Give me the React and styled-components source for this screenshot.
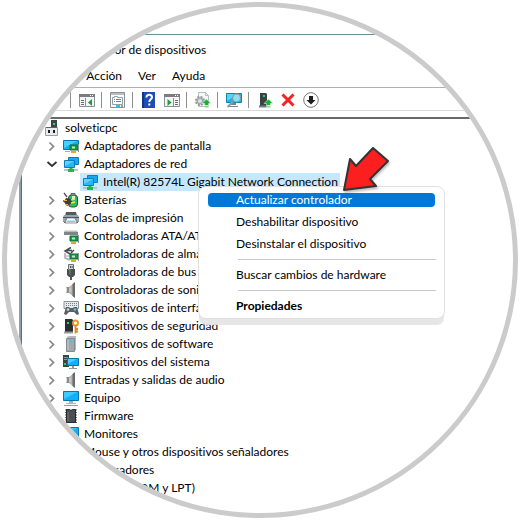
import { Fragment } from 'react';
import styled, { createGlobalStyle } from 'styled-components';

const GlobalStyle = createGlobalStyle`
  body {
    margin: 0;
    background-color: white;
  }

  button {
    padding: 0;
    border: 0;
    background: none;
    color: inherit;
    font: inherit;
  }
`;

const Lens = styled.main`
  display: flex;
  flex-direction: column;
  box-sizing: border-box;
  margin: 2px;
  aspect-ratio: 1;
  border: 5px solid #cbcbcb;
  border-radius: 50%;
  overflow: hidden;
  font-family: Lato, 'Open Sans', sans-serif;
  font-size: 12px;
  font-variant-ligatures: none;
  line-height: 18px;
  color: black;
`;

const Window = styled.section`
  display: flex;
  flex-direction: column;
  flex: 1;
  margin: 27px 0 0 12px;
  border-top: 1px solid #6c8e99;
  border-left: 2px solid #8ca0aa;
`;

const TitleBar = styled.header`
  display: flex;
  align-items: center;
  height: 30px;
  padding-left: 30px;
`;

const Title = styled.h1`
  margin: 0;
  font-size: 12px;
  font-weight: 400;
`;

const MenuBar = styled.nav`
  display: flex;
  align-items: center;
  height: 22px;
  padding-left: 1px;
`;

const MenuBarButton = styled.button`
  padding: 0 8px;
`;

const Toolbar = styled.div`
  display: flex;
  align-items: center;
  gap: 7px;
  height: 20px;
  padding: 2px 0 0 49px;
  margin-bottom: 6px;
  border-top: 1px solid #b0b0b0;
  border-bottom: 1px solid #dadada;
`;

const ToolGroup = styled.div`
  display: flex;
  gap: 7px;
  margin-right: -1px;
  padding-left: 8px;
  border-left: 1px solid #8e8e8e;
`;

const ToolButton = styled.button`
  display: flex;
`;

const TreePane = styled.div`
  flex: 1;
  border-top: 2px solid #696969;
  border-left: 1px solid #696969;
`;

const Tree = styled.ul`
  margin: 0;
  padding: 0;
  list-style: none;
`;

const Row = styled.div`
  position: relative;
  display: flex;
  align-items: center;
  height: 18px;
  padding-left: ${(props) => (props.$level === 2 ? 58 : 22)}px;
`;

const Toggle = styled.button`
  display: flex;
  width: 16px;
  margin-right: 3px;
`;

const Label = styled.span`
  display: flex;
  align-items: center;
  gap: 5px;
  white-space: nowrap;
  padding: ${(props) => (props.$selected ? '0 2px' : '0')};
  background-color: ${(props) => (props.$selected ? '#c5e8ff' : 'transparent')};
`;

const ContextMenu = styled.div`
  position: absolute;
  z-index: 1;
  top: 13px;
  left: 176px;
  display: flex;
  flex-direction: column;
  gap: 8px;
  width: 227px;
  padding: 6px 9px 5px;
  border: 1px solid #e0e0e0;
  border-radius: 8px;
  background-color: white;
  box-shadow: 0 7px 1px -1px #e6e6e6;
`;

const MenuItem = styled.button`
  padding-left: 28px;
  border-radius: 4px;
  line-height: 14px;
  text-align: left;
  font-weight: ${(props) => (props.$bold ? 700 : 400)};
  color: ${(props) => (props.$active ? 'white' : 'black')};
  background-color: ${(props) => (props.$active ? '#0078d7' : 'transparent')};
`;

const Separator = styled.hr`
  width: 198px;
  height: 1px;
  margin: 0 0 0 30px;
  border: 0;
  background-color: #c8c8c8;
`;

const Pointer = styled.svg`
  position: absolute;
  top: -42px;
  left: 142px;
  filter: drop-shadow(1px 2px 1px rgba(0, 0, 0, 0.25));
`;

const Icon = ({ children }) => (
  <svg width="16" height="16" viewBox="0 0 16 16" aria-hidden="true">
    {children}
  </svg>
);

const UpArrow = () => (
  <path d="M11.5 7l4.5 4.5h-2.5v2h-4v-2H7zM9.5 14.2h4v1.3h-4z" fill="#10b52c" stroke="white" strokeWidth=".5" />
);

const NetworkShape = () => (
  <>
    <path d="M5.5 1.5h10v7h-10z" fill="#16a9f2" stroke="#0b7fbd" />
    <path d="M1.5 4.500h10v7h-10z" fill="#24b8fb" stroke="#0b7fbd" />
    <path d="M2 5h9L2 10z" fill="#62d0ff" />
    <path d="M1 14h14" stroke="#b9c4c4" strokeWidth="2" />
    <path d="M6.500 12h3v1H11v3H5v-3h1.500z" fill="#20b84a" />
  </>
);

const Speaker = () => (
  <Icon>
    <path d="M3 5h3v6H3z" fill="#8b8b8b" />
    <path d="M6 5l5-4v14l-5-4z" fill="#b4b4b4" />
    <path d="M9.500 2L12 0v16l-2.500-2z" fill="#6b6b6b" />
    <path d="M3.500 5.500v5M7 6v4" stroke="#ddd" />
  </Icon>
);

const MonitorShape = () => (
  <>
    <path d="M.5 1.500h15v9H.5z" fill="#0fb1fb" stroke="#0876a8" />
    <path d="M1 2h13L1 9z" fill="#3fcaff" />
    <path d="M6 11h4v2H6z" fill="#a5b4bd" />
    <path d="M3 13.500h10" stroke="#a5b4bd" />
    <path d="M1 15.500h14" stroke="#8d9ba3" />
  </>
);

const Board = () => (
  <>
    <path d="M7 8h8v5H7z" fill="#169a45" stroke="#0c6c31" />
    <path d="M9 9.500h3v2H9z" fill="#bfe8c8" />
    <path d="M8 14h5v2H8z" fill="#e2a928" />
    <path d="M15.500 7v8" stroke="#8c9898" />
  </>
);

const icons = {
  pc: (
    <Icon>
      <path d="M7 0h6v8H7z" fill="#3c4347" />
      <path d="M9 3h2v2H9z" fill="#2ed66b" />
      <path d="M1.500 7.500h12v8h-12z" fill="#e9ecec" stroke="#9a9fa1" />
      <path d="M2 7.500h11" stroke="#5c6265" />
      <path d="M4 10h2v3H4zM9 10h2v3H9z" fill="#1c1c1c" />
    </Icon>
  ),
  display: (
    <Icon>
      <path d="M.5 2.500h15v9H.5z" fill="#12adf5" stroke="#0876a8" />
      <path d="M1 3h13L1 10z" fill="#48ceff" />
      <path d="M2 13.500h5" stroke="#9fb0b8" />
      <g transform="translate(0 -1)"><Board /></g>
    </Icon>
  ),
  network: <Icon><NetworkShape /></Icon>,
  battery: (
    <Icon>
      <path d="M8 1.500h4v2H8z" fill="#d9dfdf" stroke="#5b6666" />
      <rect x="5.500" y="3" width="9" height="12" rx="3" fill="#25c35e" stroke="#3e4747" />
      <path d="M9 4h3v3H9z" fill="#d5f7de" />
      <path d="M1 1l3 4M0 9h3" stroke="#555" strokeWidth="1.300" />
      <path d="M3 6l6 1v4l-5 3-3-4z" fill="#3b3f40" />
      <path d="M8 8l4-1M8 11l4-1" stroke="#ece36a" strokeWidth="1.300" />
      <path d="M1 8.500h3M2 12.500h3" stroke="#e1b03a" />
    </Icon>
  ),
  printer: (
    <Icon>
      <path d="M3 2h10l1 4H2z" fill="#545b5f" />
      <path d="M1 5h14l1 2v5H0V7z" fill="#9ba2a5" />
      <path d="M0 7.500h16M1 12.500h14" stroke="#50575a" />
      <path d="M4 8h8l2 5H2z" fill="white" stroke="#666" strokeWidth=".7" />
      <path d="M4.500 10.500h7l1 1.500h-9z" fill="#74cdf6" />
    </Icon>
  ),
  ata: (
    <Icon>
      <path d="M2 2h11l2 2v3H1V4z" fill="#b8bdc0" />
      <path d="M1 5.500h14" stroke="#7e8588" strokeWidth="3" />
      <path d="M2 2.500h11" stroke="#dadfe0" />
      <Board />
    </Icon>
  ),
  storage: (
    <Icon>
      <path d="M8 1.500L2 5l6 3.500M4 4.500h5M11 4L8 7" fill="none" stroke="#454b4e" strokeWidth="1.500" />
      <path d="M2 7v5l5 2" fill="none" stroke="#a3aaad" strokeWidth="1.500" />
      <path d="M3 10h4" stroke="#9ba2a5" />
      <Board />
    </Icon>
  ),
  usb: (
    <Icon>
      <path d="M5.500.5h5v5h-5z" fill="#d3d6d8" stroke="#6c7275" />
      <path d="M7 2h.8v2H7zM8.700 2h.8v2h-.8z" fill="#333" />
      <path d="M4 5h8v6l-2 2H6l-2-2z" fill="#494e51" />
      <path d="M5 5.500h2v5" fill="none" stroke="#80878b" />
      <path d="M8 12v4" stroke="#555" strokeWidth="2" />
    </Icon>
  ),
  sound: <Speaker />,
  hid: (
    <Icon>
      <path d="M1 1.500h14.500v7H1z" fill="#e7eaeb" stroke="#8b9295" />
      <path d="M3 3.500h11M3 5.500h11" stroke="#788084" strokeDasharray="1 1" />
      <path d="M3 7h3l1 1h3l1-1h3l2 7-2 1-3-3H6l-3 3-2-1z" fill="#596166" />
      <circle cx="5" cy="9.500" r="1.300" fill="#d0d5d7" />
      <circle cx="12" cy="9.500" r="1.300" fill="#55c5f7" />
    </Icon>
  ),
  security: (
    <Icon>
      <path d="M2 1h7l1 1v12H2z" fill="#292e30" />
      <path d="M4 4h2v2H4z" fill="#24d668" />
      <path d="M1 14.500h9" stroke="#989ea0" strokeWidth="2" />
      <circle cx="12.500" cy="5" r="2.500" fill="white" stroke="#e4992a" strokeWidth="2" />
      <path d="M12.500 7v8.500M13 11h2M13 13.500h2" stroke="#d78a1d" strokeWidth="1.800" />
    </Icon>
  ),
  software: (
    <Icon>
      <path d="M4 1l2-1h7v14l-2 1H4z" fill="#b2b8bb" />
      <path d="M3.500 2.500h8v13h-8z" fill="#a2a9ad" stroke="#848c90" />
      <path d="M7 4h2v2H7z" fill="#2cc9fa" />
      <path d="M5 4v10" stroke="#c4cacc" />
    </Icon>
  ),
  system: (
    <Icon>
      <path d="M0 1h6v12H0z" fill="#3b4347" />
      <path d="M1 3.500h4M1 5.500h4" stroke="#8b9599" />
      <path d="M1 9h2v2H1z" fill="#29d46b" />
      <path d="M4.500 4.500h11v7h-11z" fill="#13aff9" stroke="#0876a8" />
      <path d="M5 5h9l-9 5z" fill="#4aceff" />
      <path d="M9 12h2v2H9zM6 14h8v1H6z" fill="#8c9a9f" />
    </Icon>
  ),
  computer: <Icon><MonitorShape /></Icon>,
  firmware: (
    <Icon>
      <path d="M2 2h12M2 4.500h12M2 7h12M2 9.500h12M2 12h12M2 14.500h12" stroke="#666" />
      <path d="M3.500 1.500h3l1 1h1l1-1h3v13h-9z" fill="#4b4f52" stroke="#25292b" />
      <path d="M5 4v9" stroke="#73797c" />
    </Icon>
  ),
  mouse: (
    <Icon>
      <rect x="4.500" y="1" width="7" height="14" rx="3.500" fill="#e3e6e8" stroke="#727b80" />
      <path d="M8 2v4" stroke="#727b80" />
    </Icon>
  ),
};

const tools = [
  [
    ['Mostrar u ocultar el árbol', (
      <>
        <path d="M.5 2.500h15v12H.5z" fill="#f5f5f5" stroke="#8b9093" />
        <path d="M0 3.500h16" stroke="#777d80" strokeWidth="3" />
        <path d="M11 3.500h1M13 3.500h1" stroke="white" />
        <path d="M6.500 6v9" stroke="#8b9093" />
        <path d="M2 8.500h3M2 10.500h3M2 12.500h3" stroke="#647078" />
        <path d="M13 7v7l-4-3.500z" fill="#08a832" />
      </>
    )],
  ],
  [
    ['Propiedades', (
      <>
        <path d="M.5.500h14v15H.5z" fill="#fbfbfb" stroke="#8b9093" />
        <path d="M1 2h13" stroke="#b9bec1" strokeWidth="2" />
        <path d="M2.500 5.500h2v-1h3v1h5v7h-10z" fill="white" stroke="#8fa0ab" />
        <path d="M4 7.500h1M6 7.500h5M4 9.500h1M6 9.500h5" stroke="#758087" />
        <path d="M6 14h4" stroke="#22c7f5" strokeWidth="2" />
        <path d="M11 14h2" stroke="#9aa0a4" strokeWidth="2" />
      </>
    )],
  ],
  [
    ['Ayuda', (
      <>
        <path d="M1 0h13v16H1z" fill="#1d4eb5" />
        <path d="M1 0h2v16H1z" fill="#123584" />
        <path d="M5.500 5.500C5.500 1.500 11 2 11 5.200c0 2-2.700 2.300-2.700 4.800M8.300 11.500v2" fill="none" stroke="white" strokeWidth="2" />
      </>
    )],
    ['Mostrar panel de acciones', (
      <>
        <path d="M.5 2.500h15v12H.5z" fill="#f5f5f5" stroke="#8b9093" />
        <path d="M0 3.500h16" stroke="#777d80" strokeWidth="3" />
        <path d="M11 3.500h1M13 3.500h1" stroke="white" />
        <path d="M9.500 6v9" stroke="#8b9093" />
        <path d="M11 8.500h3M11 10.500h3M11 12.500h3" stroke="#647078" />
        <path d="M3.500 7v7l4-3.500z" fill="#08a832" />
      </>
    )],
  ],
  [
    ['Actualizar controlador', (
      <>
        <path d="M3.500.5h7l3 3v11h-10z" fill="#f7f7f7" stroke="#b8bdc0" />
        <path d="M10.500.5v3h3" fill="none" stroke="#b8bdc0" />
        <circle cx="5" cy="9" r="4" fill="none" stroke="#8f979b" strokeWidth="2" strokeDasharray="2 1.140" />
        <circle cx="5" cy="9" r="2.700" fill="#e1e5e7" stroke="#a0a8ac" strokeWidth="1.500" />
        <UpArrow />
      </>
    )],
  ],
  [
    ['Buscar cambios de hardware', (
      <>
        <path d="M.5 1.500h15v9H.5z" fill="#18b5ef" stroke="#0a83b3" />
        <path d="M1 2h11L1 9z" fill="#52d6ff" />
        <path d="M5 11h5v2H5zM3 14h9v1H3z" fill="#77868e" />
        <circle cx="10.500" cy="6" r="4" fill="#8fdcfa" stroke="#8b989e" strokeWidth="1.200" />
        <path d="M7.500 9l-6 6" stroke="#829fad" strokeWidth="2" />
      </>
    )],
  ],
  [
    ['Habilitar dispositivo', (
      <>
        <path d="M3 1h6l1 1v12H3z" fill="#3a4246" />
        <path d="M6 3h2v2H6z" fill="#20d357" />
        <path d="M2 14.500h8" stroke="#777e81" strokeWidth="2" />
        <UpArrow />
      </>
    )],
    ['Desinstalar dispositivo', (
      <path d="M2.500 2.500l11 11M13.500 2.500l-11 11" stroke="#f52222" strokeWidth="3" />
    )],
    ['Deshabilitar dispositivo', (
      <>
        <circle cx="8" cy="8" r="7.300" fill="white" stroke="#777" />
        <path d="M6 4h4v4h2.500L8 12.500 3.500 8H6z" fill="#1e1e1e" />
      </>
    )],
  ],
];

const devices = [
  ['display', 'Adaptadores de pantalla'],
  ['network', 'Adaptadores de red', ['Intel(R) 82574L Gigabit Network Connection']],
  ['battery', 'Baterías'],
  ['printer', 'Colas de impresión'],
  ['ata', 'Controladoras ATA/ATAPI IDE'],
  ['storage', 'Controladoras de almacenamiento'],
  ['usb', 'Controladoras de bus serie universal'],
  ['sound', 'Controladoras de sonido y vídeo'],
  ['hid', 'Dispositivos de interfaz humana'],
  ['security', 'Dispositivos de seguridad'],
  ['software', 'Dispositivos de software'],
  ['system', 'Dispositivos del sistema'],
  ['sound', 'Entradas y salidas de audio'],
  ['computer', 'Equipo'],
  ['firmware', 'Firmware'],
  ['computer', 'Monitores'],
  ['mouse', 'Mouse y otros dispositivos señaladores'],
  ['firmware', 'Procesadores'],
  ['ata', 'Puertos (COM y LPT)'],
];

const Chevron = ({ open }) => (
  <Icon>
    {open ? (
      <path d="M3.500 6l4.500 4 4.500-4" fill="none" stroke="#333" strokeWidth="1.800" />
    ) : (
      <path d="M5.500 4.500l4 4-4 4" fill="none" stroke="#858585" strokeWidth="1.700" />
    )}
  </Icon>
);

const DeviceMenu = () => (
  <ContextMenu role="menu">
    <MenuItem role="menuitem" $active>Actualizar controlador</MenuItem>
    <MenuItem role="menuitem">Deshabilitar dispositivo</MenuItem>
    <MenuItem role="menuitem">Desinstalar el dispositivo</MenuItem>
    <Separator />
    <MenuItem role="menuitem">Buscar cambios de hardware</MenuItem>
    <Separator />
    <MenuItem role="menuitem" $bold>Propiedades</MenuItem>
    <Pointer width="50" height="50" viewBox="0 0 50 50" aria-hidden="true">
      <path
        d="M3 45l6-31 6 7L32 3l15 13-18 18 6 7z"
        fill="#fb1f1f"
        stroke="#333"
        strokeWidth="2"
        strokeLinejoin="round"
      />
    </Pointer>
  </ContextMenu>
);

export default () => (
  <Lens>
    <GlobalStyle />
    <Window>
      <TitleBar>
        <Title>Administrador de dispositivos</Title>
      </TitleBar>
      <MenuBar>
        {['Archivo', 'Acción', 'Ver', 'Ayuda'].map((name) => (
          <MenuBarButton key={name}>{name}</MenuBarButton>
        ))}
      </MenuBar>
      <Toolbar>
        {tools.map((group) => (
          <ToolGroup key={group[0][0]}>
            {group.map(([name, drawing]) => (
              <ToolButton key={name} aria-label={name}>
                <Icon>{drawing}</Icon>
              </ToolButton>
            ))}
          </ToolGroup>
        ))}
      </Toolbar>
      <TreePane>
        <Tree role="tree">
          <li role="treeitem">
            <Row>
              <Label>{icons.pc}solveticpc</Label>
            </Row>
          </li>
          {devices.map(([icon, name, children]) => (
            <Fragment key={name}>
              <li role="treeitem">
                <Row>
                  <Toggle aria-label={name}>
                    <Chevron open={Boolean(children)} />
                  </Toggle>
                  <Label>{icons[icon]}{name}</Label>
                </Row>
              </li>
              {children && children.map((child) => (
                <li key={child} role="treeitem" aria-selected="true">
                  <Row $level={2}>
                    <Label $selected>{icons[icon]}{child}</Label>
                    <DeviceMenu />
                  </Row>
                </li>
              ))}
            </Fragment>
          ))}
        </Tree>
      </TreePane>
    </Window>
  </Lens>
);
